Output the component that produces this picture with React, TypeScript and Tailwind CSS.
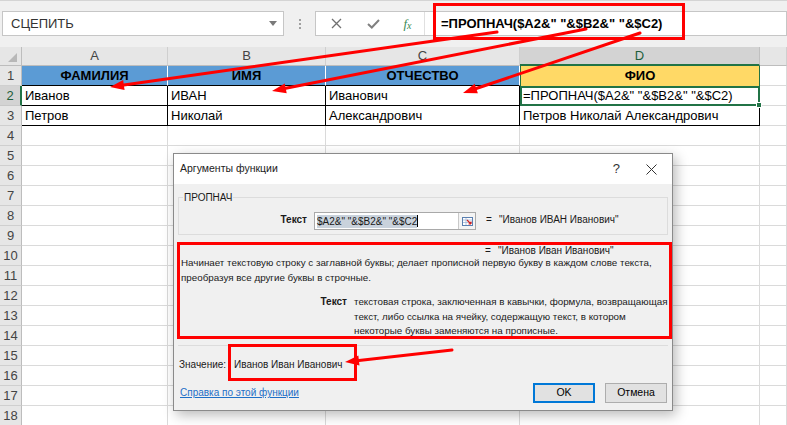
import React from 'react'

const RED = '#ff0000'

type Seg = { x1: number; y1: number; x2: number; y2: number }

function Arrow({ x1, y1, x2, y2 }: Seg) {
  const dx = x2 - x1
  const dy = y2 - y1
  const len = Math.hypot(dx, dy)
  const ux = dx / len
  const uy = dy / len
  const bx = x2 - ux * 14
  const by = y2 - uy * 14
  const px = -uy * 5
  const py = ux * 5
  return (
    <g>
      <line x1={x1} y1={y1} x2={bx} y2={by} stroke={RED} strokeWidth={3} strokeLinecap="round" />
      <polygon points={`${x2},${y2} ${bx + px},${by + py} ${bx - px},${by - py}`} fill={RED} />
    </g>
  )
}

const data: Record<number, string[]> = {
  1: ['ФАМИЛИЯ', 'ИМЯ', 'ОТЧЕСТВО', 'ФИО', ''],
  2: ['Иванов', 'ИВАН', 'Иванович', '=ПРОПНАЧ($A2&" "&$B2&" "&$C2)', ''],
  3: ['Петров', 'Николай', 'Александрович', 'Петров Николай Александрович', ''],
}

function cellClass(r: number, c: number) {
  if (r === 1 && c < 3) return 'bg-[#5b9bd5] border-r border-b border-r-white border-b-black font-bold justify-center text-[#1c1c1c]'
  if (r === 1 && c === 3) return 'bg-[#ffd966] border-x border-[#217346] font-bold justify-center text-[#1c1c1c]'
  if ((r === 2 || r === 3) && c < 3) return 'border-r border-b border-black px-[3px]'
  if (r === 2 && c === 3) return 'border-2 border-[#217346] px-[1px] relative'
  if (r === 3 && c === 3) return 'border-r border-b border-black px-[3px]'
  return 'border-r border-b border-[#dadada]'
}

function Sheet() {
  const rows = Array.from({ length: 18 }, (_, i) => i + 1)
  return (
    <div className="grid grid-cols-[22px_146px_158px_194px_240px_27px] text-[13px]">
      <div className="h-[19px] bg-[#e6e6e6] border-r border-b border-[#bdbdbd] relative">
        <div className="absolute right-[4px] bottom-[3px] w-0 h-0 border-l-[9px] border-l-transparent border-b-[9px] border-b-[#b8b8b8]" />
      </div>
      {['A', 'B', 'C', 'D', ''].map((l, i) =>
        l === 'D' ? (
          <div key={i} className="h-[19px] bg-[#d3d3d3] border-r border-[#c0c0c0] border-b-2 border-b-[#217346] flex items-center justify-center text-[#1d5e3b]">
            {l}
          </div>
        ) : (
          <div key={i} className="h-[19px] bg-[#e6e6e6] border-r border-b border-r-[#cfcfcf] border-b-[#bdbdbd] flex items-center justify-center text-[#444]">
            {l}
          </div>
        )
      )}
      {rows.map((r) => (
        <React.Fragment key={r}>
          {r === 2 ? (
            <div className="h-[20px] bg-[#d3d3d3] border-r-2 border-r-[#217346] border-b border-b-[#c8c8c8] flex items-center justify-center text-[#1d5e3b]">
              {r}
            </div>
          ) : (
            <div className="h-[20px] bg-[#e6e6e6] border-r border-b border-r-[#bdbdbd] border-b-[#cfcfcf] flex items-center justify-center text-[#444]">
              {r}
            </div>
          )}
          {[0, 1, 2, 3, 4].map((c) => (
            <div key={c} className={`h-[20px] flex items-center whitespace-nowrap overflow-visible text-black ${cellClass(r, c)}`}>
              {data[r]?.[c] ?? ''}
              {r === 2 && c === 3 && (
                <span className="absolute -right-[4px] -bottom-[4px] w-[6px] h-[6px] bg-[#217346] border border-white" />
              )}
            </div>
          ))}
        </React.Fragment>
      ))}
    </div>
  )
}

function TopBar() {
  return (
    <div className="h-[47px] bg-[#f0f0f0] border-t border-[#d4d4d4] flex items-start pt-[10px]">
      <div className="ml-[2px] w-[282px] h-[25px] bg-white border border-[#c6c6c6] flex items-center pl-[8px] pr-[6px] text-[13px] text-[#333]">
        СЦЕПИТЬ
        <svg className="ml-auto" width="8" height="5" viewBox="0 0 8 5">
          <polygon points="0,0 8,0 4,5" fill="#7a7a7a" />
        </svg>
      </div>
      <div className="w-[31px] h-[25px] flex flex-col items-center justify-center gap-[2px]">
        <span className="w-[2px] h-[2px] bg-[#a0a0a0]" />
        <span className="w-[2px] h-[2px] bg-[#a0a0a0]" />
        <span className="w-[2px] h-[2px] bg-[#a0a0a0]" />
      </div>
      <div className="flex-1 h-[25px] bg-white border border-[#c6c6c6] flex items-center">
        <div className="w-[40px] flex justify-center">
          <svg width="11" height="11" viewBox="0 0 11 11">
            <path d="M1 1 L10 10 M10 1 L1 10" stroke="#707070" strokeWidth="1.3" />
          </svg>
        </div>
        <div className="w-[35px] flex justify-center">
          <svg width="13" height="10" viewBox="0 0 13 10">
            <path d="M1 5 L4.8 8.5 L12 1" stroke="#808080" strokeWidth="2" fill="none" />
          </svg>
        </div>
        <div className="w-[33px] h-[23px] flex justify-center items-center font-['Liberation_Serif'] italic text-[#3a8a54] text-[13px]">
          f<span className="text-[10px] mt-[3px]">x</span>
        </div>
        <div className="h-[23px] border-l border-[#e0e0e0] pl-[16px] flex items-center text-[13px] font-bold text-black whitespace-nowrap">
          =ПРОПНАЧ($A2&amp;" "&amp;$B2&amp;" "&amp;$C2)
        </div>
      </div>
    </div>
  )
}

function Dialog() {
  return (
    <div className="absolute left-[173px] top-[153px] w-[500px] h-[258px] bg-[#f0f0f0] border border-[#8a8a8a] shadow-[3px_4px_12px_rgba(0,0,0,0.28)] text-[10px] text-[#1a1a1a] flex flex-col">
      <div className="h-[30px] bg-white flex items-center pl-[6px] text-[10.5px] text-[#222]">
        Аргументы функции
        <span className="ml-auto mr-[26px] text-[13px] text-[#333]">?</span>
        <svg className="mr-[15px]" width="11" height="11" viewBox="0 0 11 11">
          <path d="M0.5 0.5 L10.5 10.5 M10.5 0.5 L0.5 10.5" stroke="#333" strokeWidth="1" />
        </svg>
      </div>
      <div className="mt-[13px] mx-[4px] h-[38px] border border-[#dcdcdc] relative flex items-start pt-[14px]">
        <span className="absolute left-[4px] -top-[7px] bg-[#f0f0f0] px-[1px] leading-[13px]">ПРОПНАЧ</span>
        <div className="w-[128px] text-right font-bold">Текст</div>
        <div className="ml-[7px] w-[162px] h-[18px] bg-white border border-[#a9a9a9] flex items-center pl-[2px]">
          <span className="bg-[#c9d2dc] leading-[13px] whitespace-nowrap">$A2&amp;" "&amp;$B2&amp;" "&amp;$C2</span>
          <span className="w-[1px] h-[12px] bg-black" />
          <div className="ml-auto w-[17px] h-[16px] border-l border-[#c9c9c9] bg-[#f4f4f4] flex items-center justify-center">
            <svg width="11" height="9" viewBox="0 0 11 9">
              <rect x="0.5" y="0.5" width="10" height="8" fill="#fff" stroke="#5a7fb0" />
              <path d="M1 3 H10 M1 5.5 H10 M4 1 V8" stroke="#9fb6d6" strokeWidth="0.8" />
              <path d="M5 3 L9 7 M9 7 V4.5 M9 7 H6.5" stroke="#d02020" strokeWidth="1.2" fill="none" />
            </svg>
          </div>
        </div>
        <div className="ml-[10px] w-[13px]">=</div>
        <div className="whitespace-nowrap">"Иванов ИВАН Иванович"</div>
      </div>
      <div className="mt-[10px] h-[12px] leading-[12px] flex pl-[311px]">
        <div className="w-[13px]">=</div>
        <div className="whitespace-nowrap">"Иванов Иван Иванович"</div>
      </div>
      <div className="-mt-[1px] pl-[7px] leading-[14.5px] whitespace-nowrap text-[9.8px]">
        Начинает текстовую строку с заглавной буквы; делает прописной первую букву в каждом слове текста,
        <br />
        преобразуя все другие буквы в строчные.
      </div>
      <div className="mt-[10px] flex leading-[14.5px]">
        <div className="w-[173px] text-right font-bold">Текст</div>
        <div className="ml-[7px] whitespace-nowrap text-[9.8px]">
          текстовая строка, заключенная в кавычки, формула, возвращающая
          <br />
          текст, либо ссылка на ячейку, содержащую текст, в котором
          <br />
          некоторые буквы заменяются на прописные.
        </div>
      </div>
      <div className="mt-[6px] mx-[4px] border-t border-[#dcdcdc]" />
      <div className="mt-[12px] h-[14px] leading-[14px] flex pl-[5px]">
        <span className="w-[55px]">Значение:</span>
        <span>Иванов Иван Иванович</span>
      </div>
      <div className="mt-[11px] h-[20px] flex items-center pl-[6px] pr-[5px]">
        <span className="text-[#1e6fc7] underline">Справка по этой функции</span>
        <button className="ml-auto w-[62px] h-[20px] bg-[#e1e1e1] border-2 border-[#0078d7] text-[10.5px] text-black">OK</button>
        <button className="ml-[10px] w-[62px] h-[20px] bg-[#e1e1e1] border border-[#adadad] text-[10.5px] text-black">Отмена</button>
      </div>
    </div>
  )
}

export default function App() {
  return (
    <div className="w-[787px] h-[425px] relative overflow-hidden bg-white font-['Liberation_Sans',sans-serif]">
      <TopBar />
      <Sheet />
      <Dialog />
      <svg className="absolute inset-0 pointer-events-none" width="787" height="425">
        <rect x="434.5" y="4.5" width="249" height="34" fill="none" stroke={RED} strokeWidth="3" />
        <rect x="178.5" y="243.5" width="492" height="94" fill="none" stroke={RED} strokeWidth="3" />
        <rect x="229.5" y="345.5" width="126" height="34" fill="none" stroke={RED} strokeWidth="3" />
        <Arrow x1={497} y1={32} x2={110} y2={87} />
        <Arrow x1={586} y1={29} x2={272} y2={91} />
        <Arrow x1={640} y1={33} x2={463} y2={93} />
        <Arrow x1={452} y1={350} x2={345} y2={362} />
      </svg>
    </div>
  )
}
